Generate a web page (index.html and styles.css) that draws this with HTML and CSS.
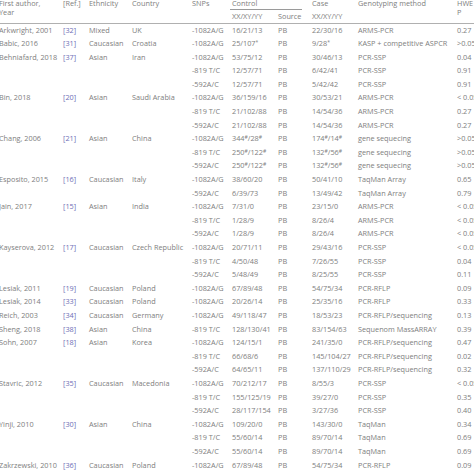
FILE: index.html
```html
<!DOCTYPE html>
<html>
<head>
<meta charset="utf-8">
<link rel="stylesheet" href="styles.css">
</head>
<body>
<table class="t">
<colgroup>
<col class="c-author"><col class="c-ref"><col class="c-eth"><col class="c-country"><col class="c-snp"><col class="c-ctrl"><col class="c-src"><col class="c-case"><col class="c-method"><col class="c-hwe">
</colgroup>
<thead>
<tr class="h1">
<th rowspan="2">First author,<br>Year</th>
<th rowspan="2">[Ref.]</th>
<th rowspan="2">Ethnicity</th>
<th rowspan="2">Country</th>
<th rowspan="2">SNPs</th>
<th colspan="2"><div class="ctrl">Control</div></th>
<th>Case</th>
<th rowspan="2">Genotyping method</th>
<th rowspan="2">HWE<br>P</th>
</tr>
<tr class="h2">
<th>XX/XY/YY</th>
<th>Source</th>
<th>XX/XY/YY</th>
</tr>
</thead>
<tbody>
<tr><td>Arkwright, 2001</td><td class="ref">[32]</td><td>Mixed</td><td>UK</td><td>-1082A/G</td><td>16/21/13</td><td>PB</td><td>22/30/16</td><td>ARMS-PCR</td><td>0.27</td></tr>
<tr><td>Babic, 2016</td><td class="ref">[31]</td><td>Caucasian</td><td>Croatia</td><td>-1082A/G</td><td>25/107<sup>*</sup></td><td>PB</td><td>9/28<sup>*</sup></td><td>KASP + competitive ASPCR</td><td>&gt;0.05</td></tr>
<tr><td>Behniafard, 2018</td><td class="ref">[37]</td><td>Asian</td><td>Iran</td><td>-1082A/G</td><td>53/75/12</td><td>PB</td><td>30/46/13</td><td>PCR-SSP</td><td>0.04</td></tr>
<tr><td></td><td></td><td></td><td></td><td>-819 T/C</td><td>12/57/71</td><td>PB</td><td>6/42/41</td><td>PCR-SSP</td><td>0.91</td></tr>
<tr><td></td><td></td><td></td><td></td><td>-592A/C</td><td>12/57/71</td><td>PB</td><td>5/42/42</td><td>PCR-SSP</td><td>0.91</td></tr>
<tr><td>Bin, 2018</td><td class="ref">[20]</td><td>Asian</td><td>Saudi Arabia</td><td>-1082A/G</td><td>36/159/16</td><td>PB</td><td>30/53/21</td><td>ARMS-PCR</td><td>&lt; 0.05</td></tr>
<tr><td></td><td></td><td></td><td></td><td>-819 T/C</td><td>21/102/88</td><td>PB</td><td>14/54/36</td><td>ARMS-PCR</td><td>0.27</td></tr>
<tr><td></td><td></td><td></td><td></td><td>-592A/C</td><td>21/102/88</td><td>PB</td><td>14/54/36</td><td>ARMS-PCR</td><td>0.27</td></tr>
<tr><td>Chang, 2006</td><td class="ref">[21]</td><td>Asian</td><td>China</td><td>-1082A/G</td><td>344<sup>#</sup>/28<sup>#</sup></td><td>PB</td><td>174<sup>#</sup>/14<sup>#</sup></td><td>gene sequecing</td><td>&gt;0.05</td></tr>
<tr><td></td><td></td><td></td><td></td><td>-819 T/C</td><td>250<sup>#</sup>/122<sup>#</sup></td><td>PB</td><td>132<sup>#</sup>/56<sup>#</sup></td><td>gene sequecing</td><td>&gt;0.05</td></tr>
<tr><td></td><td></td><td></td><td></td><td>-592A/C</td><td>250<sup>#</sup>/122<sup>#</sup></td><td>PB</td><td>132<sup>#</sup>/56<sup>#</sup></td><td>gene sequecing</td><td>&gt;0.05</td></tr>
<tr><td>Esposito, 2015</td><td class="ref">[16]</td><td>Caucasian</td><td>Italy</td><td>-1082A/G</td><td>38/60/20</td><td>PB</td><td>50/41/10</td><td>TaqMan Array</td><td>0.65</td></tr>
<tr><td></td><td></td><td></td><td></td><td>-592A/C</td><td>6/39/73</td><td>PB</td><td>13/49/42</td><td>TaqMan Array</td><td>0.79</td></tr>
<tr><td>Jain, 2017</td><td class="ref">[15]</td><td>Asian</td><td>India</td><td>-1082A/G</td><td>7/31/0</td><td>PB</td><td>23/15/0</td><td>ARMS-PCR</td><td>&lt; 0.05</td></tr>
<tr><td></td><td></td><td></td><td></td><td>-819 T/C</td><td>1/28/9</td><td>PB</td><td>8/26/4</td><td>ARMS-PCR</td><td>&lt; 0.05</td></tr>
<tr><td></td><td></td><td></td><td></td><td>-592A/C</td><td>1/28/9</td><td>PB</td><td>8/26/4</td><td>ARMS-PCR</td><td>&lt; 0.05</td></tr>
<tr><td>Kayserova, 2012</td><td class="ref">[17]</td><td>Caucasian</td><td>Czech Republic</td><td>-1082A/G</td><td>20/71/11</td><td>PB</td><td>29/43/16</td><td>PCR-SSP</td><td>&lt; 0.05</td></tr>
<tr><td></td><td></td><td></td><td></td><td>-819 T/C</td><td>4/50/48</td><td>PB</td><td>7/26/55</td><td>PCR-SSP</td><td>0.04</td></tr>
<tr><td></td><td></td><td></td><td></td><td>-592A/C</td><td>5/48/49</td><td>PB</td><td>8/25/55</td><td>PCR-SSP</td><td>0.11</td></tr>
<tr><td>Lesiak, 2011</td><td class="ref">[19]</td><td>Caucasian</td><td>Poland</td><td>-1082A/G</td><td>67/89/48</td><td>PB</td><td>54/75/34</td><td>PCR-RFLP</td><td>0.09</td></tr>
<tr><td>Lesiak, 2014</td><td class="ref">[33]</td><td>Caucasian</td><td>Poland</td><td>-1082A/G</td><td>20/26/14</td><td>PB</td><td>25/35/16</td><td>PCR-RFLP</td><td>0.33</td></tr>
<tr><td>Reich, 2003</td><td class="ref">[34]</td><td>Caucasian</td><td>Germany</td><td>-1082A/G</td><td>49/118/47</td><td>PB</td><td>18/53/23</td><td>PCR-RFLP/sequencing</td><td>0.13</td></tr>
<tr><td>Sheng, 2018</td><td class="ref">[38]</td><td>Asian</td><td>China</td><td>-819 T/C</td><td>128/130/41</td><td>PB</td><td>83/154/63</td><td>Sequenom MassARRAY</td><td>0.39</td></tr>
<tr><td>Sohn, 2007</td><td class="ref">[18]</td><td>Asian</td><td>Korea</td><td>-1082A/G</td><td>124/15/1</td><td>PB</td><td>241/35/0</td><td>PCR-RFLP/sequencing</td><td>0.47</td></tr>
<tr><td></td><td></td><td></td><td></td><td>-819 T/C</td><td>66/68/6</td><td>PB</td><td>145/104/27</td><td>PCR-RFLP/sequencing</td><td>0.02</td></tr>
<tr><td></td><td></td><td></td><td></td><td>-592A/C</td><td>64/65/11</td><td>PB</td><td>137/110/29</td><td>PCR-RFLP/sequencing</td><td>0.32</td></tr>
<tr><td>Stavric, 2012</td><td class="ref">[35]</td><td>Caucasian</td><td>Macedonia</td><td>-1082A/G</td><td>70/212/17</td><td>PB</td><td>8/55/3</td><td>PCR-SSP</td><td>&lt; 0.05</td></tr>
<tr><td></td><td></td><td></td><td></td><td>-819 T/C</td><td>155/125/19</td><td>PB</td><td>39/27/0</td><td>PCR-SSP</td><td>0.35</td></tr>
<tr><td></td><td></td><td></td><td></td><td>-592A/C</td><td>28/117/154</td><td>PB</td><td>3/27/36</td><td>PCR-SSP</td><td>0.40</td></tr>
<tr><td>Yinji, 2010</td><td class="ref">[30]</td><td>Asian</td><td>China</td><td>-1082A/G</td><td>109/20/0</td><td>PB</td><td>143/30/0</td><td>TaqMan</td><td>0.34</td></tr>
<tr><td></td><td></td><td></td><td></td><td>-819 T/C</td><td>55/60/14</td><td>PB</td><td>89/70/14</td><td>TaqMan</td><td>0.69</td></tr>
<tr><td></td><td></td><td></td><td></td><td>-592A/C</td><td>55/60/14</td><td>PB</td><td>89/70/14</td><td>TaqMan</td><td>0.69</td></tr>
<tr><td>Zakrzewski, 2010</td><td class="ref">[36]</td><td>Caucasian</td><td>Poland</td><td>-1082A/G</td><td>67/89/48</td><td>PB</td><td>54/75/34</td><td>PCR-RFLP</td><td>0.09</td></tr>
</tbody>
</table>
</body>
</html>
```
FILE: styles.css
```css
html, body {
  margin: 0;
  padding: 0;
  background: #ffffff;
  overflow: hidden;
}
.t {
  table-layout: fixed;
  border-collapse: collapse;
  width: 500px;
  margin-left: -1px;
  margin-top: -1.2px;
  font-family: "Open Sans", "Noto Sans", sans-serif;
  font-size: 7.3px;
  color: #7e7e7e;
}
.c-author { width: 64px; }
.c-ref { width: 26px; }
.c-eth { width: 43px; }
.c-country { width: 60px; }
.c-snp { width: 40px; }
.c-ctrl { width: 46px; }
.c-src { width: 34px; }
.c-case { width: 46px; }
.c-method { width: 99px; }
.c-hwe { width: 42px; }
.t th, .t td {
  padding: 0;
  text-align: left;
  white-space: nowrap;
  font-weight: normal;
  vertical-align: top;
}
.t th {
  line-height: 9px;
}
.h1 th {
  padding-bottom: 1.5px;
}
.ctrl {
  margin-left: -2px;
  padding-left: 2px;
  margin-right: 10px;
  margin-bottom: -1.5px;
  padding-bottom: 1.5px;
  border-bottom: 0.8px solid #9a9a9a;
}
.h2 th {
  padding-top: 1.2px;
  padding-bottom: 2px;
}
.t thead {
  border-bottom: 1px solid #b0b0b0;
}
.t td {
  height: 13.6px;
  line-height: 13.6px;
}
.t td.ref {
  color: #6e6eb6;
}
.t sup {
  font-size: 5px;
  line-height: 0;
  vertical-align: 2.5px;
}
```
